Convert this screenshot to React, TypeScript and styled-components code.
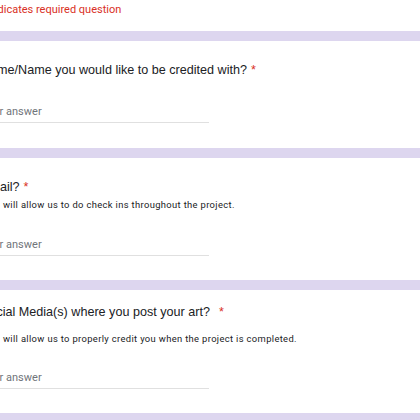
import React from 'react';
import styled, { createGlobalStyle } from 'styled-components';

const GlobalStyle = createGlobalStyle`
  html, body {
    margin: 0;
    padding: 0;
    background: #ddd6ef;
  }
  body {
    width: 420px;
    height: 420px;
    overflow: hidden;
  }
`;

const Page = styled.div`
  width: 420px;
  display: flex;
  flex-direction: column;
  gap: 10px;
  background: #ddd6ef;
`;

const Header = styled.div`
  background: #ffffff;
  height: 31px;
  box-sizing: border-box;
  padding-top: 3px;
`;

// the screenshot is cropped on the left, content starts just off-screen
const Inner = styled.div`
  margin-left: -19px;
`;

const RequiredNote = styled.div`
  font-family: Roboto, "Liberation Sans", sans-serif;
  font-size: 11px;
  line-height: 14px;
  color: #d93025;
  white-space: nowrap;
`;

const Card = styled.div<{ $top: number; $bottom: number }>`
  background: #ffffff;
  padding-top: ${(p) => p.$top}px;
  padding-bottom: ${(p) => p.$bottom}px;
`;

const Title = styled.div`
  font-family: "Liberation Sans", Arial, sans-serif;
  font-size: 12.6px;
  line-height: 16px;
  color: #202124;
  white-space: nowrap;
`;

const Star = styled.span<{ $gap: number }>`
  color: #d93025;
  margin-left: ${(p) => p.$gap}px;
`;

const Description = styled.div<{ $top: number }>`
  margin-top: ${(p) => p.$top}px;
  font-family: Roboto, "Liberation Sans", sans-serif;
  font-size: 9.4px;
  font-weight: 400;
  letter-spacing: 0.35px;
  line-height: 12px;
  color: #202124;
  white-space: nowrap;
`;

const Answer = styled.div<{ $top: number }>`
  margin-top: ${(p) => p.$top}px;
  width: 228px;
  padding-bottom: 3px;
  border-bottom: 1px solid #e0e0e0;
  font-family: Roboto, "Liberation Sans", sans-serif;
  font-size: 11px;
  line-height: 14px;
  color: #70757a;
`;

type Question = {
  title: string;
  starGap: number;
  desc?: string;
  top: number;
  descTop?: number;
  answerTop: number;
  bottom: number;
};

const questions: Question[] = [
  { title: 'Name/Name you would like to be credited with?', starGap: 4, top: 21, answerTop: 27, bottom: 25 },
  {
    title: 'Email?',
    starGap: 4,
    desc: 'This will allow us to do check ins throughout the project.',
    top: 21,
    descTop: 4,
    answerTop: 27,
    bottom: 24,
  },
  {
    title: 'Social Media(s) where you post your art?',
    starGap: 9,
    desc: 'This will allow us to properly credit you when the project is completed.',
    top: 14,
    descTop: 13,
    answerTop: 26,
    bottom: 24,
  },
];

export default function App() {
  return (
    <>
      <GlobalStyle />
      <Page>
        <Header>
          <Inner>
            <RequiredNote>* Indicates required question</RequiredNote>
          </Inner>
        </Header>
        {questions.map((q) => (
          <Card key={q.title} $top={q.top} $bottom={q.bottom}>
            <Inner>
              <Title>
                {q.title}
                <Star $gap={q.starGap}>*</Star>
              </Title>
              {q.desc && <Description $top={q.descTop ?? 0}>{q.desc}</Description>}
              <Answer $top={q.answerTop}>Your answer</Answer>
            </Inner>
          </Card>
        ))}
        <Card $top={0} $bottom={20} />
      </Page>
    </>
  );
}
